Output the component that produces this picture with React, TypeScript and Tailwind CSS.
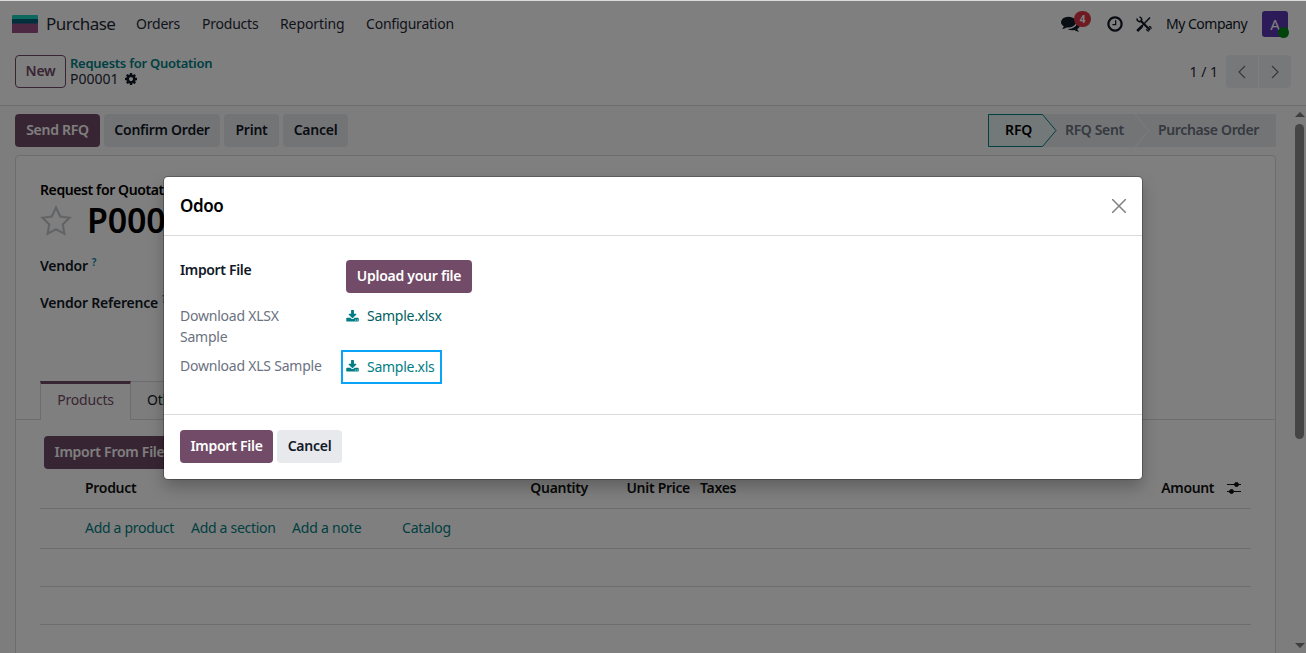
import type { ReactNode } from "react";
import clsx from "clsx";

const paths = {
  download:
    "M1280 1344q0-26-19-45t-45-19-45 19-19 45 19 45 45 19 45-19 19-45zm256 0q0-26-19-45t-45-19-45 19-19 45 19 45 45 19 45-19 19-45zm128-224v320q0 40-28 68t-68 28h-1472q-40 0-68-28t-28-68v-320q0-40 28-68t68-28h465l135 136q58 56 136 56t136-56l136-136h464q40 0 68 28t28 68zm-325-569q17 41-14 70l-448 448q-18 19-45 19t-45-19l-448-448q-31-29-14-70 17-39 59-39h256v-448q0-26 19-45t45-19h256q26 0 45 19t19 45v448h256q42 0 59 39z",
  cog: "M1152 896q0-106-75-181t-181-75-181 75-75 181 75 181 181 75 181-75 75-181zm512-109v222q0 12-8 23t-20 13l-185 28q-19 54-39 91 35 50 107 138 10 12 10 25t-9 23q-27 37-99 108t-94 71q-12 0-26-9l-138-108q-44 23-91 38-16 136-29 186-7 28-36 28h-222q-14 0-24.5-8.5t-11.5-21.5l-28-184q-49-16-90-37l-141 107q-10 9-25 9-14 0-25-11-126-114-165-168-7-10-7-23 0-12 8-23 15-21 51-66.5t54-70.5q-27-50-41-99l-183-27q-13-2-21-12.5t-8-23.5v-222q0-12 8-23t19-13l186-28q14-46 39-92-40-57-107-138-10-12-10-24 0-10 9-23 26-36 98.5-107.5t94.5-71.5q13 0 26 10l138 107q44-23 91-38 16-136 29-186 7-28 36-28h222q14 0 24.5 8.5t11.5 21.5l28 184q49 16 90 37l142-107q9-9 24-9 13 0 25 10 129 119 165 170 7 8 7 22 0 12-8 23-15 21-51 66.5t-54 70.5q26 50 41 98l183 28q13 2 21 12.5t8 23.5z",
  comments:
    "M1408 768q0 139-94 257t-256.5 186.5-353.5 68.5q-86 0-176-16-124 88-278 128-36 9-86 16h-3q-11 0-20.5-8t-11.5-21q-1-3-1-6.5t.5-6.5 2-6l2.5-5 3.5-5.5 4-5 4.5-5 4-4.5q5-6 23-25t26-29.5 22.5-29 25-38.5 20.5-44q-124-72-195-177t-71-224q0-139 94-257t256.5-186.5 353.5-68.5 353.5 68.5 256.5 186.5 94 257zm384 256q0 120-71 224.5t-195 176.5q10 24 20.5 44t25 38.5 22.5 29 26 29.5 23 25q1 1 4 4.5t4.5 5 4 5 3.5 5.500l2.5 5 2 6 .5 6.500-1 6.500q-3 14-13 22t-22 7q-50-7-86-16-154-40-278-128-90 16-176 16-271 0-472-132 58 4 88 4 161 0 309-45t264-129q125-92 192-212t67-254q0-77-23-152 129 71 204 178t75 230z",
  clock:
    "M1024 544v448q0 14-9 23t-23 9h-320q-14 0-23-9t-9-23v-64q0-14 9-23t23-9h224v-352q0-14 9-23t23-9h64q14 0 23 9t9 23zm416 352q0-148-73-273t-198-198-273-73-273 73-198 198-73 273 73 273 198 198 273 73 273-73 198-198 73-273zm224 0q0 209-103 385.5t-279.5 279.5-385.5 103-385.5-103-279.5-279.5-103-385.5 103-385.5 279.5-279.5 385.5-103 385.5 103 279.5 279.5 103 385.5z",
};

function Icon({ name, className, viewBox = "0 0 1792 1792" }: { name: keyof typeof paths; className?: string; viewBox?: string }) {
  return (
    <svg viewBox={viewBox} fill="currentColor" className={clsx("shrink-0", className)}>
      <path d={paths[name]} />
    </svg>
  );
}

function Button({ primary, className, children }: { primary?: boolean; className?: string; children: ReactNode }) {
  return (
    <button
      className={clsx(
        "h-[33px] shrink-0 rounded-[4px] pb-[2px] text-center font-semibold tracking-[-0.26px] whitespace-nowrap",
        primary ? "bg-[#714b67] text-white" : "bg-[#e7e9ed] text-[#111827]",
        className
      )}
    >
      {children}
    </button>
  );
}

function Navbar() {
  return (
    <header className="flex h-[45px] items-center bg-white text-[#374151]">
      <svg viewBox="0 0 26 18" className="ml-3 h-[18px] w-[26px]">
        <path d="M1 0h24a1 1 0 0 1 1 1v4H0V1a1 1 0 0 1 1-1z" fill="#1ad3bb" />
        <path d="M0 4h26v4a1 1 0 0 1-1 1H0z" fill="#005e7a" />
        <path d="M0 8.500h26V17a1 1 0 0 1-1 1H0z" fill="#985184" />
      </svg>
      <span className="ml-2 w-[70px] text-[17px] tracking-[-0.5px] text-[#1f2937]">Purchase</span>
      <nav className="ml-5 flex text-[#1f2937]">
        <span className="w-[66px]">Orders</span>
        <span className="w-[78px]">Products</span>
        <span className="w-[86px] tracking-[-0.1px]">Reporting</span>
        <span>Configuration</span>
      </nav>
      <div className="ml-auto flex items-center text-[#111827]">
        <div className="relative mr-[26px]">
          <Icon name="comments" className="size-[19px]" />
          <span className="absolute -top-[3px] left-[13px] flex h-4 w-[17px] items-center justify-center rounded-full bg-[#dc3545] text-[10px] font-bold text-white">
            4
          </span>
        </div>
        <Icon name="clock" className="mr-3 size-[18px]" />
        <svg viewBox="0 0 16 16" className="mr-[14px] size-4" fill="none" stroke="currentColor">
          <path d="M2 14.200 14 1.600" strokeWidth="1.500" />
          <path d="M1.200 15 6.300 10" strokeWidth="2.600" />
          <path d="M4.500 4.500 14 14" strokeWidth="2.200" />
          <path d="M1.200 2.500a2.500 2.500 0 0 0 4 2.500A2.600 2.600 0 0 0 3.500 1" strokeWidth="1.600" />
          <path d="M10.600 13a2.600 2.600 0 0 0 2.500 2.200M15.300 12.800A2.600 2.600 0 0 0 13 10.500" strokeWidth="1.300" />
        </svg>
        <span className="w-24 tracking-[-0.5px] whitespace-nowrap">My Company</span>
        <div className="relative mr-[18px] flex size-[26px] items-center justify-center rounded-[3px] bg-[#5b37b2] text-[15px] text-white">
          A
          <span className="absolute top-[16px] left-[16px] size-[11px] rounded-full bg-[#008818]" />
        </div>
      </div>
    </header>
  );
}

function ControlPanel() {
  return (
    <div className="flex h-[60px] border-b border-[#d8dadd] bg-white px-[15px] pt-[9px]">
      <button className="h-[33px] w-[51px] rounded-[4px] border border-[#714b67] pb-[2px] font-semibold text-[#714b67]">New</button>
      <div className="ml-1 leading-4">
        <div className="text-[13px] font-semibold tracking-[-0.26px] text-[#017e84]">Requests for Quotation</div>
        <div className="flex items-center tracking-normal text-[#1f2937]">
          <span className="w-[54px]">P00001</span>
          <Icon name="cog" className="size-[14px] text-[#111827]" />
        </div>
      </div>
      <div className="ml-auto flex h-[33px] items-center text-[#1f2937]">
        <span className="mr-2 tracking-normal">1 / 1</span>
        {["m10 1-6 6 6 6", "m4 1 6 6-6 6"].map((d, i) => (
          <span
            key={d}
            className={clsx("flex h-[33px] w-8 items-center justify-center bg-[#eff0f2] text-[#6b7280]", i === 0 ? "mr-px rounded-l-[4px]" : "rounded-r-[4px]")}
          >
            <svg viewBox="0 0 14 14" className="size-[14px]" fill="none" stroke="currentColor" strokeWidth="1.200">
              <path d={d} />
            </svg>
          </span>
        ))}
      </div>
    </div>
  );
}

function StatusBar() {
  return (
    <div className="flex h-[49px] items-center gap-1 pr-[15px] pl-[15px]">
      <Button primary className="w-[85px]">Send RFQ</Button>
      <Button className="w-[116px]">Confirm Order</Button>
      <Button className="w-[55px]">Print</Button>
      <Button className="w-[65px]">Cancel</Button>
      <div className="relative ml-auto flex h-[33px] w-[288px] items-center rounded-r-[2px] bg-[#e7e9ed] pb-[2px] font-semibold tracking-[-0.36px] text-[#6b7280]">
        <svg viewBox="0 0 288 33" className="absolute inset-0 h-[33px] w-[288px]" fill="none">
          <path d="M.5.500H54.500L68 16.500 54.500 32.500H.5z" fill="#e6f2f3" stroke="#017e84" />
          <path d="M147 0 160.500 16.500 147 33" stroke="#f8faf9" />
        </svg>
        <span className="relative ml-[17px] w-[60px] tracking-[-0.1px] text-black">RFQ</span>
        <span className="relative w-[93px]">RFQ Sent</span>
        <span className="relative whitespace-nowrap">Purchase Order</span>
      </div>
    </div>
  );
}

function OrderLines() {
  return (
    <div className="mx-6 font-semibold tracking-[-0.3px] text-[#111]">
      <div className="flex h-10 items-center border-b border-[#d8dadd] pb-[2px]">
        <span className="ml-[45px] w-[360px]">Product</span>
        <span className="w-[143px] text-right">Quantity</span>
        <span className="w-[102px] text-right">Unit Price</span>
        <span className="ml-[10px]">Taxes</span>
        <span className="ml-auto tracking-[-0.4px]">Amount</span>
        <svg viewBox="0 0 14 12" className="mr-[10px] ml-[13px] h-3 w-[14px]" stroke="currentColor" fill="currentColor">
          <path d="M0 2.500h14M0 9.500h14" />
          <circle cx="9.500" cy="2.500" r="2" />
          <circle cx="4.500" cy="9.500" r="2" />
        </svg>
      </div>
      <div className="flex h-10 items-center border-b border-[#d8dadd] pb-[2px] pl-[45px] font-normal text-[#017e84]">
        <span className="w-[106px]">Add a product</span>
        <span className="w-[101px]">Add a section</span>
        <span className="w-[110px] tracking-[-0.2px]">Add a note</span>
        <span className="tracking-[-0.2px]">Catalog</span>
      </div>
      <div className="h-[38px] border-b border-[#d8dadd]" />
      <div className="h-[38px] border-b border-[#d8dadd]" />
    </div>
  );
}

function FormSheet() {
  return (
    <div className="mx-[15px] h-[560px] rounded-[4px] border border-[#d8dadd] bg-white text-[#111827]">
      <div className="h-[225px] px-6 pt-6">
        <div className="h-5 leading-5 font-semibold tracking-[-0.4px] text-black">Request for Quotation</div>
        <div className="flex h-[45px] items-center pb-[5px] text-black">
          <svg viewBox="0 0 32 31" className="h-[31px] w-8" fill="none" stroke="#c5c8cd" strokeWidth="2.200">
            <path d="m16 2.500 4.200 9 9.300 1.200-6.800 6.700 1.700 9.400-8.400-4.600-8.400 4.600 1.700-9.400L2.500 12.700l9.300-1.200z" />
          </svg>
          <span className="ml-[15px] text-[34px] leading-none font-semibold">P00001</span>
        </div>
        <div className="mt-[11px] flex h-[20px] items-center font-semibold">
          Vendor <sup className="top-[-4px] ml-1 text-[10px] text-[#0180a5]">?</sup>
        </div>
        <div className="mt-[17px] flex h-5 items-center font-semibold tracking-[-0.22px]">
          Vendor Reference <sup className="top-[-4px] ml-1 text-[10px] text-[#0180a5]">?</sup>
        </div>
      </div>
      <div className="flex h-[39px]">
        <div className="w-6 border-b border-[#d8dadd]" />
        <div className="flex w-[91px] items-center justify-center border-x border-t-3 border-[#d8dadd] border-t-[#714b67] pb-[4px] text-[#714b67]">Products</div>
        <div className="flex w-[140px] items-center border-t border-b border-[#d8dadd] bg-[#f8faf9] pb-[2px] pl-4">Other Information</div>
        <div className="flex-1 border-b border-[#d8dadd]" />
      </div>
      <div className="mt-4 ml-7 flex h-[33px]">
        <Button primary className="w-[131px]">Import From File</Button>
      </div>
      <OrderLines />
    </div>
  );
}

function Scrollbar() {
  return (
    <div className="flex w-[15px] flex-col items-center bg-[#fafafa] pt-1.5 pb-[5px] pl-[2px]">
      <span className="border-x-[5px] border-b-[5px] border-x-transparent border-b-[#7c7c7c]" />
      <span className="mt-[7px] h-[315px] w-[9px] rounded-full bg-[#8a8a8a]" />
      <span className="mt-auto border-x-[5px] border-t-[5px] border-x-transparent border-t-[#7c7c7c]" />
    </div>
  );
}

function ImportDialog() {
  return (
    <div className="absolute top-[177px] left-[164px] flex h-[302px] w-[978px] flex-col rounded-[4px] bg-white text-[#111827] shadow-[0_0_0_1px_rgba(0,0,0,0.25),0_8px_16px_rgba(0,0,0,0.25)]">
      <div className="flex h-[59px] items-center justify-between border-b border-[#d8dadd] px-4">
        <h4 className="text-[17px] font-semibold tracking-[-0.4px] text-black">Odoo</h4>
        <svg viewBox="0 0 14 14" className="size-[14px]" stroke="#808080" strokeWidth="1.500">
          <path d="M0 0l14 14M14 0 0 14" />
        </svg>
      </div>
      <div className="grid h-[178px] grid-cols-[166px_1fr] grid-rows-[33px_50px_50px] content-start px-4 pt-6 leading-[21px]">
        <span className="-mt-px font-semibold tracking-[-0.35px]">Import File</span>
        <Button primary className="w-[126px]">Upload your file</Button>
        <span className="pt-3 text-[#6b7280]">Download XLSX<br />Sample</span>
        <span className="flex h-[45px] items-center tracking-[-0.27px] text-[#015f64]">
          <Icon name="download" viewBox="0 0 1664 1600" className="mr-2 h-[12px] w-[13px] text-[#017e84]" />
          Sample.xlsx
        </span>
        <span className="pt-3 text-[#6b7280]">Download XLS Sample</span>
        <span className="mt-[7px] -ml-[5px] flex h-[34px] w-[101px] items-center border-2 border-[#09a3f8] pb-[2px] pl-[3px] tracking-[-0.27px] text-[#017e84]">
          <Icon name="download" viewBox="0 0 1664 1600" className="mr-2 h-[12px] w-[13px]" />
          Sample.xls
        </span>
      </div>
      <div className="flex flex-1 gap-1 border-t border-[#d8dadd] px-4 pt-[15px]">
        <Button primary className="w-[93px]">Import File</Button>
        <Button className="w-[65px]">Cancel</Button>
      </div>
    </div>
  );
}

export default function App() {
  return (
    <div className="relative h-[653px] w-[1306px] overflow-hidden bg-white font-['Noto_Sans',sans-serif] text-[14px] leading-5 tracking-[-0.22px]">
      <div className="h-px bg-[#d8dadd]" />
      <Navbar />
      <ControlPanel />
      <div className="flex h-[547px] overflow-hidden bg-[#f8faf9]">
        <main className="w-[1291px]">
          <StatusBar />
          <FormSheet />
        </main>
        <Scrollbar />
      </div>
      <div className="absolute inset-x-0 top-px bottom-0 bg-black/50" />
      <ImportDialog />
    </div>
  );
}
